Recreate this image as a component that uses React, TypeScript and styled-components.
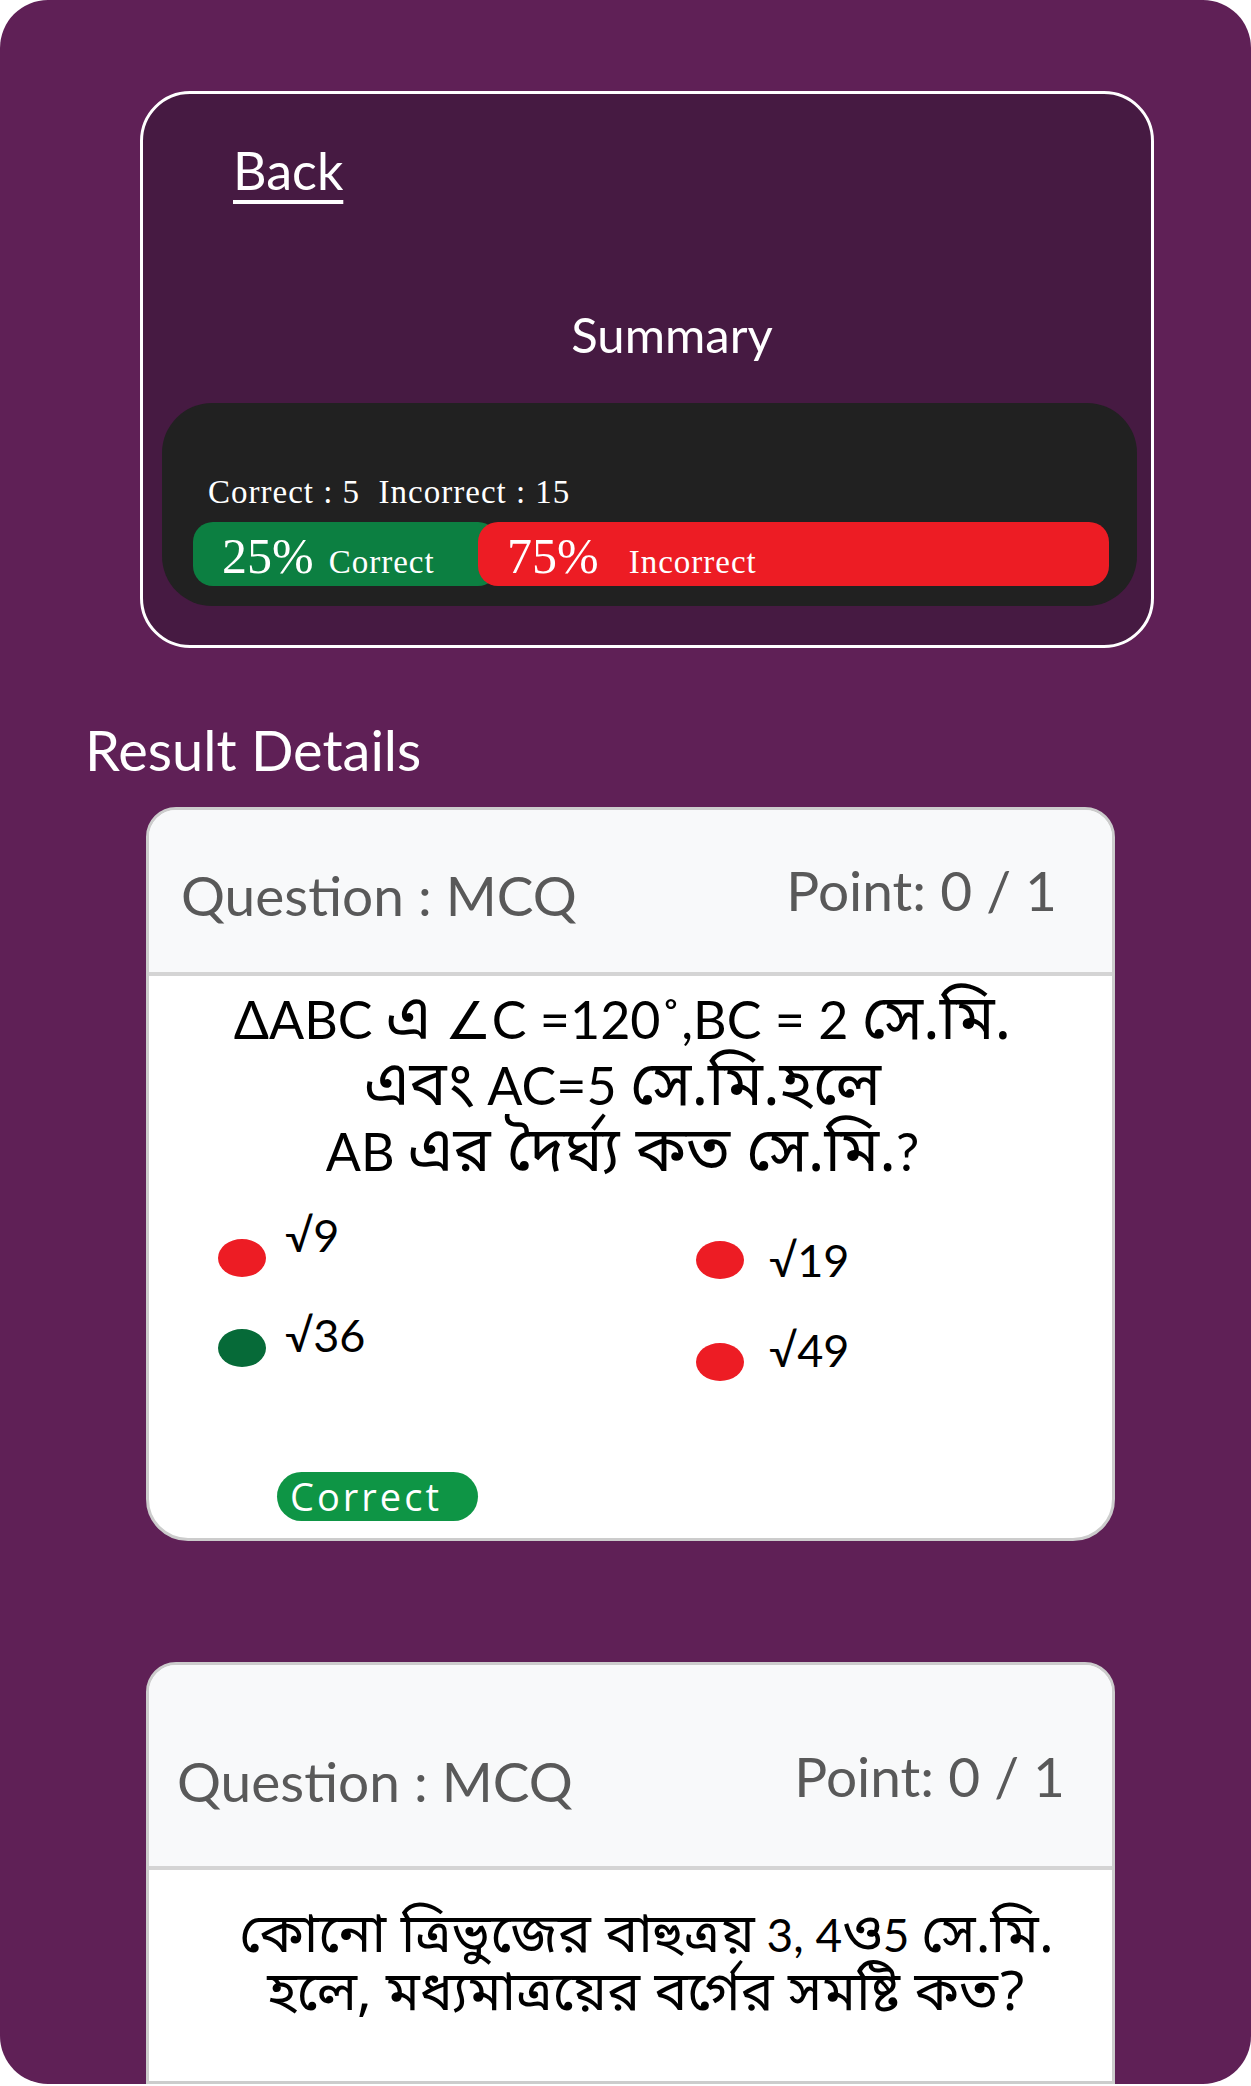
import React from "react";
import styled, { createGlobalStyle } from "styled-components";

const GlobalStyle = createGlobalStyle`
  html, body { margin: 0; padding: 0; background: #ffffff; }
  body { font-family: Lato, "Open Sans", sans-serif; }
  * { box-sizing: border-box; }
`;

const Screen = styled.main`
  width: 1251px;
  height: 2084px;
  background: #5f2056;
  border-radius: 48px;
  overflow: hidden;
  padding-top: 91px;
  display: flex;
  flex-direction: column;
`;

const SummaryCard = styled.section`
  width: 1014px;
  margin-left: 140px;
  border: 3px solid #ffffff;
  border-radius: 50px;
  background: #461a42;
  padding: 50px 14px 39px 19px;
  display: flex;
  flex-direction: column;
`;

const BackLink = styled.a`
  align-self: flex-start;
  margin-left: 71px;
  font-family: Lato, sans-serif;
  font-size: 52px;
  line-height: 1;
  color: #ffffff;
  text-decoration: underline;
  text-decoration-thickness: 4px;
  text-underline-offset: 10px;
  cursor: pointer;
`;

const SummaryTitle = styled.h2`
  margin: 114px 0 0;
  padding-left: 45px;
  font-family: Lato, sans-serif;
  font-weight: 400;
  font-size: 49px;
  line-height: 1;
  color: #ffffff;
  text-align: center;
`;

const ScoreBox = styled.div`
  margin-top: 44px;
  background: #212121;
  border-radius: 50px;
  padding: 73px 28px 20px 31px;
  display: flex;
  flex-direction: column;
`;

const ScoreLine = styled.div`
  margin-left: 15px;
  font-family: "Liberation Serif", serif;
  font-size: 33px;
  letter-spacing: 1px;
  line-height: 1;
  color: #ffffff;
  white-space: pre;
`;

const Bar = styled.div`
  margin-top: 13px;
  height: 64px;
  display: flex;
`;

const Segment = styled.div<{ $color: string; $width?: number; $overlap?: number }>`
  ${(p) => (p.$width ? `flex: 0 0 ${p.$width}px;` : "flex: 1;")}
  margin-left: ${(p) => -(p.$overlap ?? 0)}px;
  height: 64px;
  border-radius: 20px;
  background: ${(p) => p.$color};
  padding: 9px 0 0 29px;
  display: flex;
  align-items: baseline;
  color: #ffffff;
  font-family: "Liberation Serif", serif;
`;

const Percent = styled.span`
  font-size: 50px;
  line-height: 1;
`;

const SegLabel = styled.span<{ $gap: number }>`
  margin-left: ${(p) => p.$gap}px;
  font-size: 33px;
  letter-spacing: 1px;
  line-height: 1;
`;

const SectionTitle = styled.h2`
  margin: 74px 0 0 85px;
  font-family: Lato, sans-serif;
  font-weight: 400;
  font-size: 56px;
  line-height: 1;
  color: #ffffff;
`;

const QuestionCard = styled.article<{ $top: number; $open?: boolean }>`
  width: 969px;
  margin-left: 146px;
  margin-top: ${(p) => p.$top}px;
  border: 3px solid #cccccc;
  border-radius: ${(p) => (p.$open ? "30px 30px 0 0" : "30px 30px 42px 42px")};
  background: #ffffff;
  overflow: hidden;
  display: flex;
  flex-direction: column;
  ${(p) => (p.$open ? "flex: 1;" : "")}
`;

const CardHeader = styled.header<{
  $padTop: number;
  $padBottom: number;
  $padLeft: number;
  $padRight: number;
}>`
  background: #f8f9fa;
  border-bottom: 4px solid #d4d4d4;
  display: flex;
  justify-content: space-between;
  align-items: flex-end;
  padding: ${(p) => `${p.$padTop}px ${p.$padRight}px ${p.$padBottom}px ${p.$padLeft}px`};
  font-family: Lato, sans-serif;
  font-size: 55px;
  line-height: 1;
  color: #595959;
`;

const HeaderText = styled.span``;

const PointText = styled.span`
  margin-bottom: 5px;
`;

const CardBody = styled.div<{ $padTop: number }>`
  padding: ${(p) => p.$padTop}px 0 17px;
  display: flex;
  flex-direction: column;
`;

const QuestionText = styled.p<{ $size: number; $lh: number; $shift: number }>`
  margin: 0;
  font-family: Lato, "Noto Sans Bengali", "Noto Serif Bengali", "Lohit Bengali", sans-serif;
  font-size: ${(p) => p.$size}px;
  line-height: ${(p) => p.$lh}px;
  color: #000000;
  text-align: center;
  padding-left: ${(p) => (p.$shift > 0 ? p.$shift * 2 : 0)}px;
  padding-right: ${(p) => (p.$shift < 0 ? -p.$shift * 2 : 0)}px;
`;

const Bn = styled.span.attrs({ lang: "bn" })`
  font-family: "Noto Sans Bengali", "Noto Serif Bengali", "Lohit Bengali", sans-serif;
  font-size: 1.2em;
  line-height: 0;
`;

const OptionsGrid = styled.div`
  margin-top: 55px;
  padding-left: 69px;
  display: grid;
  grid-template-columns: 478px 1fr;
`;

const OptionColumn = styled.div<{ $gap: number; $offset: number }>`
  display: flex;
  flex-direction: column;
  gap: ${(p) => p.$gap}px;
  padding-top: ${(p) => p.$offset}px;
`;

const OptionRow = styled.div`
  display: flex;
  align-items: flex-start;
`;

const Dot = styled.span<{ $color: string }>`
  flex: none;
  width: 48px;
  height: 38px;
  border-radius: 50%;
  background: ${(p) => p.$color};
`;

const OptionLabel = styled.span<{ $gap: number; $lift: number }>`
  margin-left: ${(p) => p.$gap}px;
  margin-top: ${(p) => -p.$lift}px;
  font-family: Lato, "DejaVu Sans", sans-serif;
  font-size: 45px;
  line-height: 38px;
  color: #000000;
`;

const Badge = styled.span`
  align-self: flex-start;
  margin: 91px 0 0 128px;
  width: 201px;
  height: 49px;
  border-radius: 25px;
  background: #0e9545;
  color: #ffffff;
  font-family: "Open Sans", sans-serif;
  font-size: 38px;
  letter-spacing: 3px;
  line-height: 49px;
  padding-left: 13px;
`;

const RED = "#ed1c24";
const DARK_GREEN = "#066a38";

type Option = { label: string; color: string; lift: number };

const leftOptions: Option[] = [
  { label: "√9", color: RED, lift: 23 },
  { label: "√36", color: DARK_GREEN, lift: 13 },
];
const rightOptions: Option[] = [
  { label: "√19", color: RED, lift: 0 },
  { label: "√49", color: RED, lift: 12 },
];

export default function App() {
  return (
    <>
      <GlobalStyle />
      <Screen>
        <SummaryCard>
          <BackLink>Back</BackLink>
          <SummaryTitle>Summary</SummaryTitle>
          <ScoreBox>
            <ScoreLine>{"Correct : 5  Incorrect : 15"}</ScoreLine>
            <Bar>
              <Segment $color="#0c7f41" $width={305}>
                <Percent>25%</Percent>
                <SegLabel $gap={15}>Correct</SegLabel>
              </Segment>
              <Segment $color={RED} $overlap={20}>
                <Percent>75%</Percent>
                <SegLabel $gap={30}>Incorrect</SegLabel>
              </Segment>
            </Bar>
          </ScoreBox>
        </SummaryCard>

        <SectionTitle>Result Details</SectionTitle>

        <QuestionCard $top={29}>
          <CardHeader $padTop={53} $padBottom={49} $padLeft={32} $padRight={55}>
            <HeaderText>Question : MCQ</HeaderText>
            <PointText>Point: 0 / 1</PointText>
          </CardHeader>
          <CardBody $padTop={10}>
            <QuestionText $size={52} $lh={66} $shift={-8}>
              ΔABC <Bn>এ</Bn> ∠C =120˚,BC = 2 <Bn>সে.মি.</Bn>
              <br />
              <Bn>এবং</Bn> AC=5 <Bn>সে.মি.হলে</Bn>
              <br />
              AB <Bn>এর দৈর্ঘ্য কত সে.মি.</Bn>?
            </QuestionText>
            <OptionsGrid>
              <OptionColumn $gap={52} $offset={0}>
                {leftOptions.map((o) => (
                  <OptionRow key={o.label}>
                    <Dot $color={o.color} />
                    <OptionLabel $gap={19} $lift={o.lift}>
                      {o.label}
                    </OptionLabel>
                  </OptionRow>
                ))}
              </OptionColumn>
              <OptionColumn $gap={64} $offset={2}>
                {rightOptions.map((o) => (
                  <OptionRow key={o.label}>
                    <Dot $color={o.color} />
                    <OptionLabel $gap={25} $lift={o.lift}>
                      {o.label}
                    </OptionLabel>
                  </OptionRow>
                ))}
              </OptionColumn>
            </OptionsGrid>
            <Badge>Correct</Badge>
          </CardBody>
        </QuestionCard>

        <QuestionCard $top={121} $open>
          <CardHeader $padTop={84} $padBottom={57} $padLeft={28} $padRight={47}>
            <HeaderText>Question : MCQ</HeaderText>
            <PointText>Point: 0 / 1</PointText>
          </CardHeader>
          <CardBody $padTop={36}>
            <QuestionText $size={46} $lh={58} $shift={16}>
              <Bn>কোনো ত্রিভুজের বাহুত্রয়</Bn> 3, 4<Bn>ও</Bn>5 <Bn>সে.মি.</Bn>
              <br />
              <Bn>হলে, মধ্যমাত্রয়ের বর্গের সমষ্টি কত?</Bn>
            </QuestionText>
          </CardBody>
        </QuestionCard>
      </Screen>
    </>
  );
}
